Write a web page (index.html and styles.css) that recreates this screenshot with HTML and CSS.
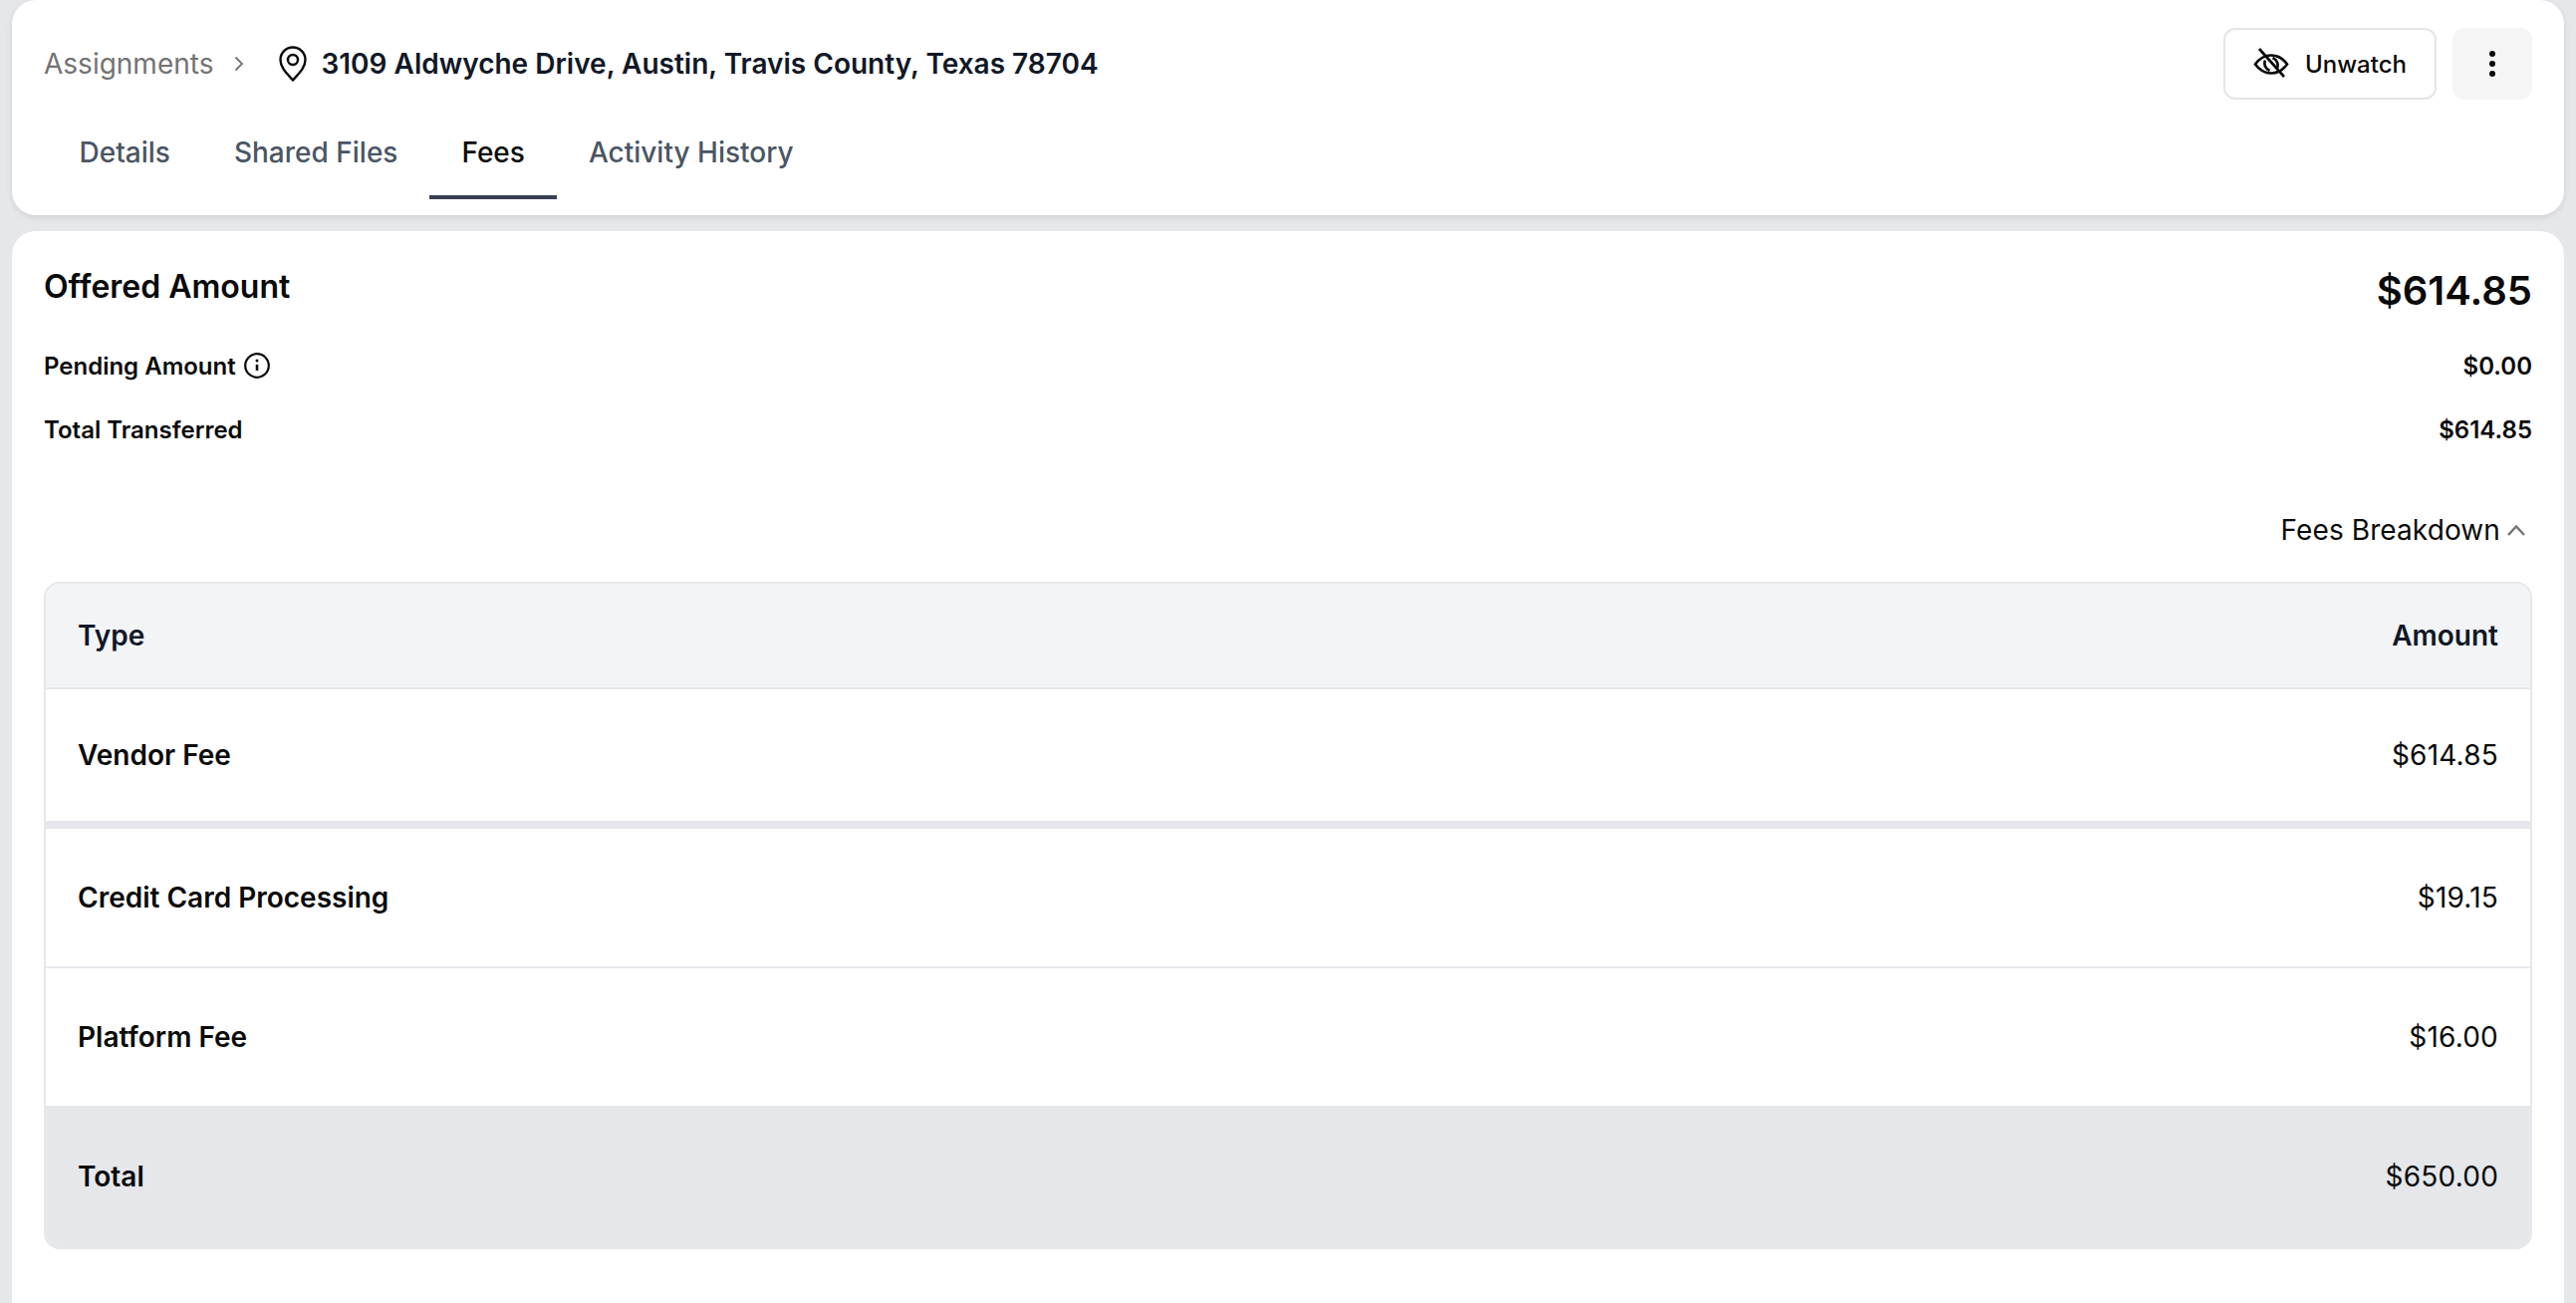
FILE: index.html
```html
<!DOCTYPE html>
<html lang="en">
<head>
    <meta charset="UTF-8">
    <title>Assignment Fees</title>
    <link rel="stylesheet" href="styles.css">
</head>
<body>
    <!-- Header card -->
    <div class="card header-card">
        <div class="top-row">
            <div class="breadcrumb">
                <span class="crumb">Assignments</span>
                <svg class="crumb-arrow" viewBox="0 0 12 16" fill="none" stroke="#737373" stroke-width="1.8"><path d="M2.5 1.5 9 8l-6.500 6.500"/></svg>
                <svg class="pin" viewBox="0 0 28 36" fill="none" stroke="#0a0a0a" stroke-width="2.400" stroke-linejoin="round"><path d="M14 34.500C9 28.500 1.500 22.500 1.500 14a12.500 12.500 0 0 1 25 0C26.500 22.500 19 28.500 14 34.500z"/><circle cx="14" cy="14" r="5"/></svg>
                <span class="address">3109 Aldwyche Drive, Austin, Travis County, Texas 78704</span>
            </div>
            <div class="actions">
                <button class="btn-watch">
                    <svg class="eye" viewBox="0 0 36 36" fill="none" stroke="#0a0a0a" stroke-width="2.700"><path d="M2 18.500C6 13 11.500 9.500 18 9.500s12 3.500 16 9c-4 5.500-9.500 9-16 9s-12-3.500-16-9z"/><path d="M12 14.500c-1.500 4 0 8.500 4.500 10.500M24 22.500c1.500-4 0-8.500-4.500-10.500"/><path d="M6 3l25 28"/></svg>
                    Unwatch
                </button>
                <button class="btn-more">
                    <span class="dot"></span><span class="dot"></span><span class="dot"></span>
                </button>
            </div>
        </div>
        <div class="tabs">
            <div class="tab">Details</div>
            <div class="tab">Shared Files</div>
            <div class="tab active">Fees</div>
            <div class="tab">Activity History</div>
        </div>
    </div>

    <!-- Fees card -->
    <div class="card fees-card">
        <div class="offered-row">
            <div class="offered-label">Offered Amount</div>
            <div class="offered-value">$614.85</div>
        </div>
        <div class="summary-row pending">
            <div class="summary-label">
                Pending Amount
                <svg class="info" viewBox="0 0 26 26" fill="none" stroke="#0a0a0a" stroke-width="2.200"><circle cx="13" cy="13" r="11.800"/><path d="M13 12v6" stroke-width="2.600"/><circle cx="13" cy="8" r="1.500" fill="#0a0a0a" stroke="none"/></svg>
            </div>
            <div>$0.00</div>
        </div>
        <div class="summary-row">
            <div class="summary-label">Total Transferred</div>
            <div>$614.85</div>
        </div>

        <div class="breakdown-toggle">
            Fees Breakdown
            <svg class="chevron" viewBox="0 0 18 11" fill="none" stroke="#737373" stroke-width="2.400"><path d="M1 10l8-8.500 8 8.500"/></svg>
        </div>

        <div class="fees-table">
            <div class="fee-row head">
                <div>Type</div>
                <div>Amount</div>
            </div>
            <div class="fee-row vendor">
                <div class="fee-name">Vendor Fee</div>
                <div class="fee-amount">$614.85</div>
            </div>
            <div class="fee-row credit">
                <div class="fee-name">Credit Card Processing</div>
                <div class="fee-amount">$19.15</div>
            </div>
            <div class="fee-row platform">
                <div class="fee-name">Platform Fee</div>
                <div class="fee-amount">$16.00</div>
            </div>
            <div class="fee-row total">
                <div class="fee-name">Total</div>
                <div class="fee-amount">$650.00</div>
            </div>
        </div>
    </div>
</body>
</html>
```
FILE: styles.css
```css
html, body {
    height: 100%;
}
body {
    margin: 0;
    padding: 0 12px;
    height: 1308px;
    overflow: hidden;
    box-sizing: border-box;
    background-color: #e5e7eb;
    font-family: "Inter", "Liberation Sans", sans-serif;
    color: #0a0a0a;
}
.card {
    background-color: #fff;
    border-radius: 24px;
}
.header-card {
    padding: 28px 32px 16px;
    box-shadow: 0 2px 6px rgba(0, 0, 0, 0.1);
}
.top-row {
    display: flex;
    justify-content: space-between;
    align-items: center;
    height: 72px;
}
.breadcrumb {
    display: flex;
    align-items: center;
}
.crumb {
    font-size: 28px;
    line-height: 40px;
    color: #737373;
}
.crumb-arrow {
    width: 12px;
    height: 16px;
    margin-left: 20px;
}
.pin {
    width: 28px;
    height: 36px;
    margin-left: 34px;
}
.address {
    margin-left: 14px;
    font-size: 28px;
    line-height: 40px;
    font-weight: 600;
    color: #111827;
}
.actions {
    display: flex;
    gap: 16px;
}
.btn-watch {
    display: flex;
    align-items: center;
    justify-content: center;
    gap: 16px;
    width: 214px;
    height: 72px;
    padding: 0;
    background-color: #fff;
    border: 2px solid #e5e5e5;
    border-radius: 12px;
    font-family: inherit;
    font-size: 24px;
    font-weight: 500;
    color: #0a0a0a;
}
.eye {
    width: 36px;
    height: 36px;
}
.btn-more {
    display: flex;
    flex-direction: column;
    align-items: center;
    justify-content: center;
    gap: 4px;
    width: 80px;
    height: 72px;
    padding: 0;
    background-color: #f5f5f5;
    border: none;
    border-radius: 12px;
}
.dot {
    width: 6px;
    height: 6px;
    border-radius: 50%;
    background-color: #0a0a0a;
}
.tabs {
    display: flex;
    margin: 10px 0 0 3.5px;
}
.tab {
    padding: 23px 32px;
    font-size: 28px;
    line-height: 40px;
    font-weight: 500;
    color: #4b5563;
    border-bottom: 4px solid transparent;
}
.tab.active {
    color: #0a0a0a;
    border-bottom-color: #374151;
}
.fees-card {
    margin-top: 16px;
    padding: 34px 32px 0;
    height: 1100px;
}
.offered-row {
    display: flex;
    justify-content: space-between;
    align-items: flex-start;
    height: 54px;
}
.offered-label {
    font-size: 32px;
    line-height: 44px;
    font-weight: 600;
}
.offered-value {
    font-size: 40px;
    line-height: 52px;
    font-weight: 600;
}
.summary-row {
    display: flex;
    justify-content: space-between;
    align-items: center;
    height: 40px;
    margin-top: 24px;
    font-size: 24px;
    font-weight: 600;
}
.summary-row.pending {
    margin-top: 27px;
}
.summary-label {
    display: flex;
    align-items: center;
    gap: 8px;
}
.info {
    width: 26px;
    height: 26px;
}
.breakdown-toggle {
    display: flex;
    justify-content: flex-end;
    align-items: center;
    gap: 7px;
    margin-top: 61px;
    padding-right: 7px;
    font-size: 28px;
    line-height: 40px;
    letter-spacing: 0.1px;
}
.chevron {
    width: 18px;
    height: 11px;
}
.fees-table {
    margin-top: 32px;
    border: 2px solid #e5e7eb;
    border-radius: 16px;
    overflow: hidden;
}
.fee-row {
    display: flex;
    justify-content: space-between;
    align-items: center;
    padding: 0 32px;
    font-size: 28px;
}
.fee-name {
    font-weight: 600;
}
.fee-amount {
    letter-spacing: 0.2px;
}
.head {
    height: 104px;
    background-color: #f3f4f6;
    border-bottom: 2px solid #e5e7eb;
    font-weight: 600;
    color: #111827;
}
.vendor {
    height: 132px;
    border-bottom: 8px solid #e5e7eb;
}
.credit {
    height: 138px;
    border-bottom: 2px solid #e5e7eb;
}
.platform {
    height: 138px;
}
.total {
    height: 142px;
    background-color: #e5e7eb;
}
```
